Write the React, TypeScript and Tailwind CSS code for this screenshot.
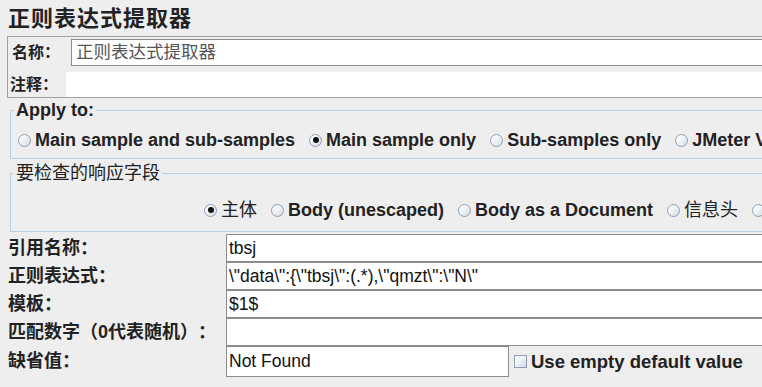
import React from "react";

const font = { fontFamily: '"Liberation Sans", "Noto Sans CJK SC", sans-serif' };

function Radio({ checked }: { checked?: boolean }) {
  return (
    <span className="relative inline-flex w-[13px] h-[13px] shrink-0 rounded-full border border-[#8f9fb3] bg-gradient-to-br from-[#ffffff] via-[#eef2f6] to-[#cfd8e3] items-center justify-center">
      {checked && <span className="w-[6px] h-[6px] rounded-full bg-[#111111]" />}
    </span>
  );
}

function RItem({ label, checked, cjk }: { label: string; checked?: boolean; cjk?: boolean }) {
  return (
    <div className="flex items-center gap-[4px] shrink-0">
      <Radio checked={checked} />
      <span className={cjk ? "text-[18px] leading-[22px] text-[#222222]" : "text-[18px] leading-[22px] font-bold text-[#222222]"}>{label}</span>
    </div>
  );
}

export default function App() {
  const rows: { label: string; value: string }[] = [
    { label: "引用名称：", value: "tbsj" },
    { label: "正则表达式：", value: '\\"data\\":{\\"tbsj\\":(.*),\\"qmzt\\":\\"N\\"' },
    { label: "模板：", value: "$1$" },
    { label: "匹配数字（0代表随机）：", value: "" },
  ];
  return (
    <div className="w-[762px] h-[387px] bg-[#eeeeee] overflow-hidden text-[#222222] [text-spacing-trim:space-all]" style={font}>
      <div className="h-[36px] flex items-center pl-[8px] text-[22px] tracking-[1px] font-bold text-[#222222]">正则表达式提取器</div>

      <div className="ml-[7px] border border-r-0 border-[#a0a0a0] pt-[2px]">
        <div className="flex items-center h-[27px]">
          <div className="w-[63px] pl-[4px] text-[16px] font-bold">名称：</div>
          <div className="flex-1 h-[27px] bg-white border border-r-0 border-[#8c8c8c] flex items-center pl-[4px] text-[17.5px] text-[#555555]">正则表达式提取器</div>
        </div>
        <div className="flex items-center h-[25px] mt-[6px]">
          <div className="w-[58px] pl-[2px] text-[16px] font-bold">注释：</div>
          <div className="flex-1 h-[25px] bg-white" />
        </div>
      </div>

      <fieldset className="ml-[10px] mt-[3px] border border-r-0 border-[#b8cfe5] overflow-hidden">
        <legend className="ml-[3px] px-[2px] text-[18px] leading-[18px] font-bold">Apply to:</legend>
        <div className="pt-[10px] pb-[7px] pl-[7px] flex items-center h-[39px] gap-[14px] whitespace-nowrap">
          <RItem label="Main sample and sub-samples" />
          <RItem label="Main sample only" checked />
          <RItem label="Sub-samples only" />
          <RItem label="JMeter Variable Name to use" />
        </div>
      </fieldset>

      <fieldset className="ml-[10px] mt-[5px] border border-r-0 border-[#b8cfe5] overflow-hidden">
        <legend className="ml-[3px] px-[2px] text-[18px] leading-[18px]">要检查的响应字段</legend>
        <div className="pt-[17px] pb-[10px] pl-[193px] flex items-center h-[49px] gap-[14px] whitespace-nowrap">
          <RItem label="主体" checked cjk />
          <RItem label="Body (unescaped)" />
          <RItem label="Body as a Document" />
          <RItem label="信息头" cjk />
          <RItem label="请求头" cjk />
        </div>
      </fieldset>

      <div className="mt-[2px] flex flex-col">
        {rows.map((r) => (
          <div key={r.label} className="flex items-center h-[28px]">
            <div className="w-[226px] pl-[8px] text-[18px] font-bold whitespace-nowrap">{r.label}</div>
            <div className="flex-1 h-[28px] bg-white border border-r-0 border-[#8c8c8c] flex items-center pl-[2px] text-[17.5px] text-[#111111] whitespace-nowrap overflow-hidden">{r.value}</div>
          </div>
        ))}
        <div className="flex items-center h-[31px]">
          <div className="w-[226px] pl-[8px] text-[18px] font-bold">缺省值：</div>
          <div className="w-[283px] h-[31px] bg-white border border-[#8c8c8c] flex items-center pl-[2px] text-[17.5px] text-[#111111]">Not Found</div>
          <div className="ml-[5px] flex items-center gap-[4px]">
            <span className="w-[13px] h-[13px] border border-[#8f9fb3] bg-gradient-to-br from-[#ffffff] via-[#eef2f6] to-[#cfd8e3]" />
            <span className="text-[18.5px] font-bold whitespace-nowrap">Use empty default value</span>
          </div>
        </div>
      </div>
    </div>
  );
}
